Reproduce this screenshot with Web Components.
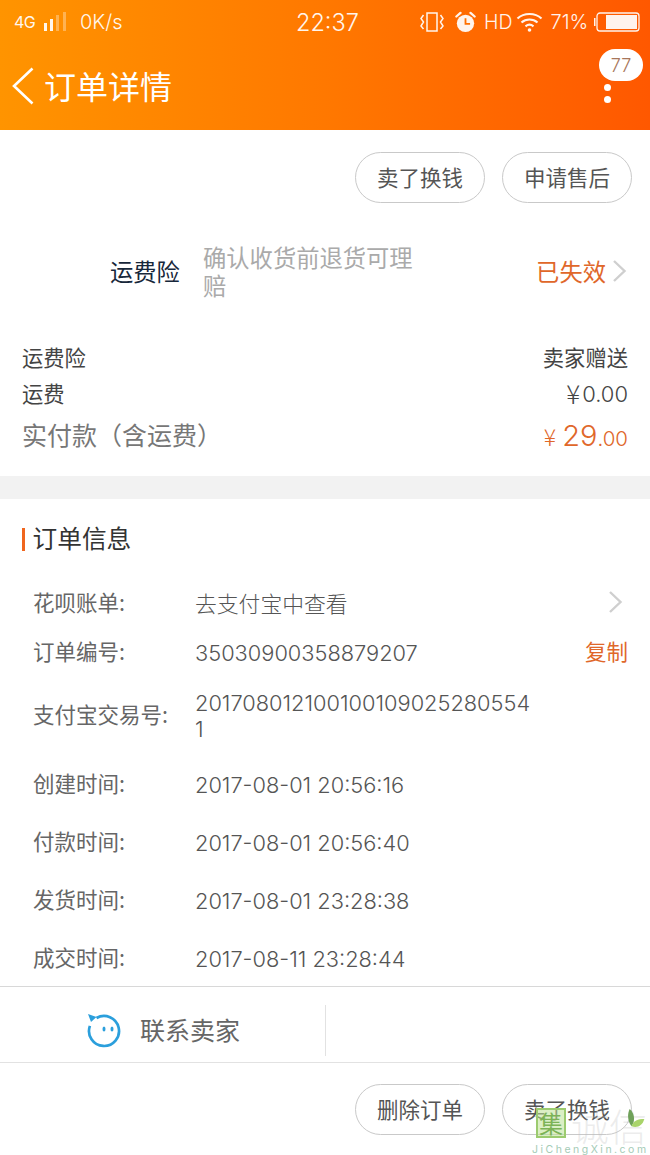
<!DOCTYPE html>
<html lang="zh">
<head>
<meta charset="utf-8">
<title>订单详情</title>
<style>
html, body { margin: 0; padding: 0; background: #fff; }
body { width: 650px; height: 1155px; overflow: hidden; position: relative; font-family: "Noto Sans CJK SC", sans-serif; }
</style>
</head>
<body>
<order-header></order-header>
<pill-row>
  <pill-button>卖了换钱</pill-button>
  <pill-button>申请售后</pill-button>
</pill-row>
<insurance-row></insurance-row>
<price-summary></price-summary>
<order-info>
  <info-row label="花呗账单:" chevron h="49">去支付宝中查看</info-row>
  <info-row label="订单编号:" copy h="49">35030900358879207</info-row>
  <info-row label="支付宝交易号:" h="79" pad="2">2017080121001001090252805541</info-row>
  <info-row label="创建时间:" h="58">2017-08-01 20:56:16</info-row>
  <info-row label="付款时间:" h="58">2017-08-01 20:56:40</info-row>
  <info-row label="发货时间:" h="58">2017-08-01 23:28:38</info-row>
  <info-row label="成交时间:" h="58">2017-08-11 23:28:44</info-row>
</order-info>
<contact-bar></contact-bar>
<pill-row bottom>
  <pill-button>删除订单</pill-button>
  <pill-button>卖了换钱</pill-button>
</pill-row>
<site-mark></site-mark>

<script>
const cjk = '"Noto Sans CJK SC", sans-serif';
const num = 'Inter, "Noto Sans CJK SC", sans-serif';
const chevron = `<svg width="15" height="24" viewBox="0 0 15 24" fill="none" stroke="#cfcfcf" stroke-width="2.4"><path d="M2 2l10.5 10L2 22"/></svg>`;

class OrderHeader extends HTMLElement {
  connectedCallback() {
    const root = this.attachShadow({ mode: 'open' });
    root.innerHTML = `
    <style>
    :host { display: block; height: 130px; color: #fff; background: linear-gradient(90deg, #ff9400 0%, #ff7800 50%, #ff5800 100%); font-family: ${num}; font-weight: 300; position: relative; }
    .status { height: 44px; display: flex; align-items: center; opacity: .93; }
    .net { font-size: 16px; margin-left: 14px; width: 29px; font-weight: 400; letter-spacing: -.5px; }
    .speed { font-size: 20px; margin-left: 11px; width: 216px; }
    .time { font-size: 23.5px; width: 124px; }
    .hd { font-size: 19.5px; margin: 0 4px 0 8px; }
    .pct { font-size: 20px; margin: 0 6px 0 7px; }
    svg { display: block; flex: none; }
    .nav { height: 86px; display: flex; align-items: center; padding-bottom: 2px; box-sizing: border-box; }
    .back { margin: 0 10px 0 12px; }
    h1 { font: 400 32px ${cjk}; margin: 0 0 2px; line-height: 40px; }
    .badge { position: absolute; left: 599px; top: 49px; width: 44px; height: 32px; border-radius: 16px; background: #fff; color: #a8765a; font-size: 18px; line-height: 33px; text-align: center; }
    .dot { position: absolute; left: 603.5px; width: 7px; height: 7px; border-radius: 50%; background: #fff; }
    </style>
    <div class="status">
      <span class="net">4G</span>
      <svg width="26" height="20" viewBox="0 0 26 20" fill="#fff"><rect x="1" y="11" width="3" height="8"/><rect x="7" y="7" width="3" height="12"/><rect x="13" y="3" width="3" height="16" opacity=".35"/><rect x="20" y="0" width="3" height="19" opacity=".35"/></svg>
      <span class="speed">0K/s</span>
      <span class="time">22:37</span>
      <svg width="24" height="22" viewBox="0 0 24 22" fill="none" stroke="#fff" stroke-width="1.5"><rect x="7" y="2" width="10" height="18"/><path d="M3.5 4L1 7.5l2.500 3.500L1 15l2.500 3M20.500 4L23 7.500l-2.500 3.500L23 15l-2.500 3"/></svg>
      <svg style="margin-left:11px" width="21" height="24" viewBox="0 0 23 24"><circle cx="11.500" cy="13.500" r="9.500" fill="#fff"/><path d="M11.500 8v6h5" fill="none" stroke="#ff7000" stroke-width="2"/><path d="M1.500 6L6 2M21.500 6L17 2" stroke="#fff" stroke-width="2.500" stroke-linecap="round"/></svg>
      <span class="hd">HD</span>
      <svg width="27" height="22" viewBox="0 0 27 22" fill="none" stroke="#fff" stroke-width="2.200"><path d="M1.500 7.500C8 1.500 19 1.500 25.500 7.500M5.500 11.500c4.500-4 11.500-4 16 0M9.500 15.300c2.500-2 5.500-2 8 0"/><circle cx="13.500" cy="19" r="1.800" fill="#fff" stroke="none"/></svg>
      <span class="pct">71%</span>
      <svg width="46" height="20" viewBox="0 0 46 20"><rect x="0" y="6" width="1.500" height="8" fill="#fff"/><rect x="3" y="1" width="42" height="18" rx="3" fill="none" stroke="#fff" stroke-width="1.300"/><rect x="12" y="3" width="31" height="14" fill="#fff"/></svg>
    </div>
    <div class="nav">
      <svg class="back" width="22" height="38" viewBox="0 0 22 38" fill="none" stroke="#fff" stroke-width="2.600"><path d="M20.500 1.500L2 19l18.500 17.500"/></svg>
      <h1>订单详情</h1>
    </div>
    <div class="badge">77</div>
    <div class="dot" style="top:83.500px"></div>
    <div class="dot" style="top:95.500px"></div>`;
  }
}

class PillRow extends HTMLElement {
  connectedCallback() {
    const root = this.attachShadow({ mode: 'open' });
    root.innerHTML = `
    <style>
    :host { display: flex; justify-content: flex-end; gap: 17px; padding: 22px 18px 0 0; height: 51px; }
    :host([bottom]) { height: 71px; padding-top: 21px; }
    </style>
    <slot></slot>`;
  }
}

class PillButton extends HTMLElement {
  connectedCallback() {
    const root = this.attachShadow({ mode: 'open' });
    root.innerHTML = `
    <style>
    :host { display: flex; align-items: center; justify-content: center; box-sizing: border-box; width: 130px; height: 51px; padding-bottom: 2px; border: 1.500px solid #c9c9c9; border-radius: 26px; font-size: 21.500px; color: #555; font-family: ${cjk}; background: #fff; }
    </style>
    <slot></slot>`;
  }
}

class InsuranceRow extends HTMLElement {
  connectedCallback() {
    const root = this.attachShadow({ mode: 'open' });
    root.innerHTML = `
    <style>
    :host { display: flex; align-items: center; height: 135px; box-sizing: border-box; padding: 1px 23px 0 110px; font-family: ${cjk}; }
    .name { font-size: 23.300px; color: #17273a; width: 93px; flex: none; }
    .desc { font-size: 23.300px; line-height: 28px; color: #aaa; width: 212px; flex: none; }
    .state { font-size: 23.300px; color: #e0672a; margin-left: auto; margin-right: 6px; }
    svg { display: block; }
    </style>
    <span class="name">运费险</span>
    <span class="desc">确认收货前退货可理赔</span>
    <span class="state">已失效</span>
    ${chevron}`;
  }
}

class PriceSummary extends HTMLElement {
  connectedCallback() {
    const root = this.attachShadow({ mode: 'open' });
    root.innerHTML = `
    <style>
    :host { display: block; height: 138px; padding: 0 22px; font-family: ${cjk}; color: #444; font-size: 21.300px; border-bottom: 23px solid #f2f2f2; }
    .row { display: flex; justify-content: space-between; align-items: center; height: 36px; }
    .total { height: 46px; margin-top: 1px; color: #777; font-size: 25px; }
    .paren { font-family: "Noto Sans CJK TC", sans-serif; }
    .money { font: 300 22px ${num}; color: #444; display: flex; align-items: center; gap: 2px; margin-top: 4px; }
    .pay { color: #e0672a; font: 300 20.500px ${num}; display: flex; align-items: baseline; margin-top: 2px; }
    .pay b { font-weight: 300; font-size: 29px; margin-left: 6px; }
    .y { font-family: ${cjk}; font-size: 23px; }
    .money .y { font-size: 26px; line-height: 26px; margin-top: -3px; }
    </style>
    <div class="row"><span>运费险</span><span>卖家赠送</span></div>
    <div class="row"><span>运费</span><span class="money"><span class="y">¥</span>0.00</span></div>
    <div class="row total"><span>实付款<span class="paren">（</span>含运费<span class="paren">）</span></span><span class="pay"><span class="y">¥</span><b>29</b>.00</span></div>`;
  }
}

class OrderInfo extends HTMLElement {
  connectedCallback() {
    const root = this.attachShadow({ mode: 'open' });
    root.innerHTML = `
    <style>
    :host { display: block; font-family: ${num}; height: 488px; box-sizing: border-box; border-bottom: 1.500px solid #d8d8d8; }
    h2 { font: 400 24.700px ${cjk}; color: #333; margin: 0; height: 80px; display: flex; align-items: center; padding-left: 22px; }
    h2 i { display: block; width: 2.500px; height: 23px; background: #f0661e; margin-right: 8px; }
    h2 span { margin-bottom: 4px; }
    </style>
    <h2><i></i><span>订单信息</span></h2>
    <slot></slot>`;
  }
}

class InfoRow extends HTMLElement {
  connectedCallback() {
    const root = this.attachShadow({ mode: 'open' });
    const extra = this.hasAttribute('chevron') ? chevron : this.hasAttribute('copy') ? '<span class="copy">复制</span>' : '';
    const pad = this.getAttribute('pad') || 0;
    root.innerHTML = `
    <style>
    :host { display: flex; align-items: center; box-sizing: border-box; padding: 0 22px ${pad}px 33px; height: ${this.getAttribute('h')}px; font: 21.500px ${cjk}; color: #666; }
    .label { width: 162px; flex: none; margin-bottom: 5px; }
    .val { width: 340px; word-break: break-all; flex: none; font: 300 21.800px/26px ${num}; color: #555; }
    .copy { color: #e0672a; margin-left: auto; margin-bottom: 4px; }
    svg { margin-left: auto; margin-right: 5px; display: block; margin-bottom: 3px; }
    </style>
    <span class="label">${this.getAttribute('label')}</span>
    <span class="val"><slot></slot></span>
    ${extra}`;
  }
}

class ContactBar extends HTMLElement {
  connectedCallback() {
    const root = this.attachShadow({ mode: 'open' });
    root.innerHTML = `
    <style>
    :host { display: flex; align-items: flex-start; height: 76px; box-sizing: border-box; border-bottom: 1.500px solid #e2e2e2; font-family: ${cjk}; }
    .left { width: 326px; height: 51px; flex: none; box-sizing: border-box; border-right: 1.500px solid #e2e2e2; display: flex; align-items: center; padding-left: 87px; margin-top: 18px; }
    span { font-size: 25px; color: #666; margin: 0 0 3px 19px; }
    svg { display: block; }
    </style>
    <div class="left">
      <svg width="34" height="34" viewBox="0 0 34 34" fill="none"><path d="M9.500 4A15 15 0 1 1 2.900 11.900" stroke="#2b9fdc" stroke-width="2.700"/><path d="M1 0l8.500 3-5.500 5z" fill="#2b9fdc"/><ellipse cx="17" cy="15" rx="1.500" ry="2.600" fill="#2b9fdc"/><ellipse cx="25" cy="15" rx="1.500" ry="2.600" fill="#2b9fdc"/></svg>
      <span>联系卖家</span>
    </div>`;
  }
}

class SiteMark extends HTMLElement {
  connectedCallback() {
    const root = this.attachShadow({ mode: 'open' });
    root.innerHTML = `
    <style>
    :host { display: block; position: absolute; left: 530px; top: 1104px; width: 120px; height: 51px; font-family: ${cjk}; }
    .box { position: absolute; left: 6px; top: 4px; width: 30px; height: 30px; box-sizing: border-box; border: 2.500px solid #9ccb6f; background: rgba(190,225,150,.55); color: #7cb356; font-size: 24px; line-height: 25px; text-align: center; }
    .cn { position: absolute; left: 41px; top: 4px; font-size: 38px; line-height: 34px; color: rgba(190,190,190,.3); font-weight: 300; }
    .en { position: absolute; left: 2px; top: 40px; font: 10.500px/12px Inter, sans-serif; letter-spacing: 2.500px; color: #a4cbb6; white-space: nowrap; }
    .leaf { position: absolute; left: 97px; top: 4px; }
    </style>
    <div class="box">集</div>
    <div class="cn">诚信</div>
    <div class="en">JiChengXin.com</div>
    <svg class="leaf" width="20" height="22" viewBox="0 0 20 24"><path d="M2 1c-3 6-2 14 2 19 4-5 4-14-2-19z" fill="#6fa15a"/><path d="M4 20c2-6 7-8 14-8-2 7-7 10-14 8z" fill="#a9d46a"/></svg>`;
  }
}

customElements.define('order-header', OrderHeader);
customElements.define('pill-row', PillRow);
customElements.define('pill-button', PillButton);
customElements.define('insurance-row', InsuranceRow);
customElements.define('price-summary', PriceSummary);
customElements.define('order-info', OrderInfo);
customElements.define('info-row', InfoRow);
customElements.define('contact-bar', ContactBar);
customElements.define('site-mark', SiteMark);
</script>
</body>
</html>
